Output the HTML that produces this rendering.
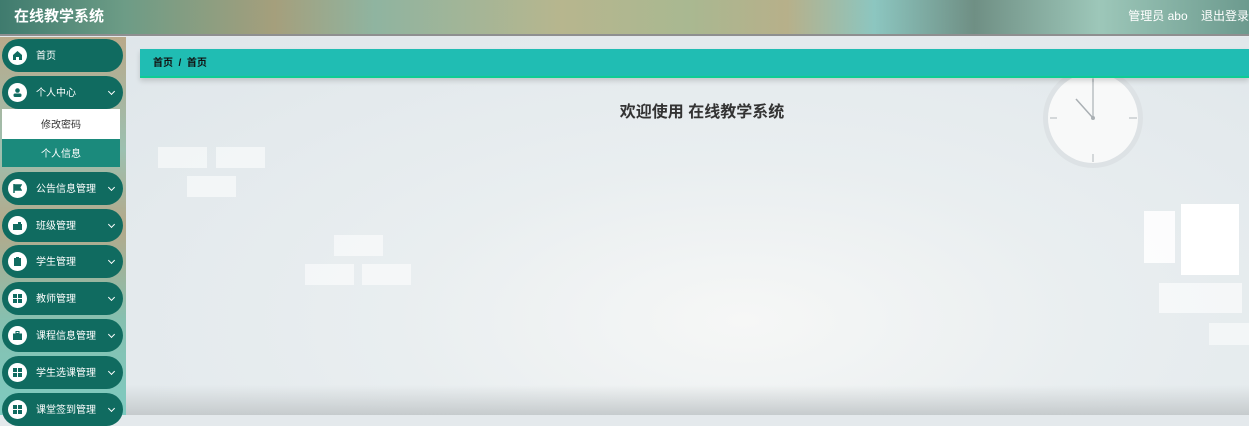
<!DOCTYPE html>
<html><head><meta charset="utf-8"><style>
*{margin:0;padding:0;box-sizing:border-box}
body{width:1249px;height:415px;overflow:hidden;position:relative;font-family:"Liberation Sans","Noto Sans CJK SC",sans-serif;background:#e4e9ec}
.hdr{position:absolute;left:0;top:0;width:1249px;height:36px;background:linear-gradient(90deg,#3f7b6e 0%,#6d9c86 10%,#a59f7c 22%,#8fb4a0 30%,#b7b68e 45%,#a9b891 55%,#b7b08a 63%,#8cc6c0 70%,#6f8f84 78%,#9dc7b9 88%,#6c9a8e 100%);border-bottom:2px solid #8e8f90}
.hdr .t{position:absolute;left:14px;top:8px;color:#fff;font-size:15px;font-weight:bold;line-height:18px}
.hdr .r{position:absolute;right:0;top:9px;color:#fff;font-size:12px;line-height:14px}
.side{position:absolute;left:0;top:37px;width:126px;height:378px;background:linear-gradient(180deg,#b9a98a 0%,#9cc0b0 30%,#b4a98a 50%,#86c0b0 75%,#7ecac0 100%)}
.main{position:absolute;left:126px;top:37px;width:1123px;height:378px;background:radial-gradient(ellipse at 55% 75%,#f6f7f6 0%,#e9eef0 40%,#dfe6ea 100%)}
.bot{position:absolute;left:126px;top:385px;width:1123px;height:30px;background:linear-gradient(180deg,rgba(200,205,208,0),#c6cbcd)}
.it{position:absolute;left:2px;width:121px;height:33px;background:#106b60;border-radius:17px;color:#fff;font-size:10px;line-height:12px}
.it .ic{position:absolute;left:6px;top:7px;width:19px;height:19px;border-radius:50%;background:#fff}
.it .ic svg{position:absolute;left:5px;top:5px}
.it .l{position:absolute;left:34px;top:12px}
.it .a{position:absolute;right:9px;top:13px;width:5px;height:5px;border-right:1px solid #fff;border-bottom:1px solid #fff;transform:rotate(45deg)}
.sub{position:absolute;left:2px;width:118px;color:#333;font-size:10px;line-height:12px;text-align:center}
.bc{position:absolute;left:140px;top:49px;width:1109px;height:29px;background:#20bdb3;border-bottom:2px solid #0fcc94;box-shadow:0 3px 5px rgba(0,0,0,.15);font-size:10px;line-height:12px;font-weight:bold;color:#111;padding:9px 0 0 13px}
.ti{position:absolute;left:0;width:1249px;top:104px;text-align:center;font-size:16px;line-height:18px;font-weight:bold;color:#333;padding-left:155px}
.sq{position:absolute;background:rgba(255,255,255,.55)}
</style></head><body>
<div class="hdr"><div class="t">在线教学系统</div><div class="r">管理员 abo&nbsp;&nbsp;&nbsp;&nbsp;退出登录</div></div>
<div class="side"></div>
<div class="main"></div>
<div class="bot"></div>
<div class="sq" style="left:158px;top:147px;width:49px;height:21px"></div>
<div class="sq" style="left:216px;top:147px;width:49px;height:21px"></div>
<div class="sq" style="left:187px;top:176px;width:49px;height:21px"></div>
<div class="sq" style="left:334px;top:235px;width:49px;height:21px"></div>
<div class="sq" style="left:305px;top:264px;width:49px;height:21px"></div>
<div class="sq" style="left:362px;top:264px;width:49px;height:21px"></div>
<div class="sq" style="left:1144px;top:211px;width:31px;height:52px;background:rgba(255,255,255,.85)"></div>
<div class="sq" style="left:1181px;top:204px;width:58px;height:71px;background:#fff"></div>
<div class="sq" style="left:1159px;top:283px;width:83px;height:30px;background:rgba(255,255,255,.6)"></div>
<div class="sq" style="left:1209px;top:323px;width:40px;height:22px;background:rgba(255,255,255,.5)"></div>
<svg style="position:absolute;left:1040px;top:66px" width="106" height="104"><circle cx="53" cy="52" r="50" fill="#dde2e5"/><circle cx="53" cy="52" r="45" fill="#f8f9f9"/><g stroke="#c8cdd0" stroke-width="1.5"><line x1="53" y1="9" x2="53" y2="16"/><line x1="53" y1="88" x2="53" y2="96"/><line x1="10" y1="52" x2="17" y2="52"/><line x1="89" y1="52" x2="97" y2="52"/></g><line x1="53" y1="52" x2="53" y2="13" stroke="#aab0b4" stroke-width="1.2"/><line x1="53" y1="52" x2="36" y2="33" stroke="#aab0b4" stroke-width="1.5"/><circle cx="53" cy="52" r="2" fill="#aab0b4"/></svg>
<div class="bc">首页&nbsp;&nbsp;/&nbsp;&nbsp;首页</div>
<div class="ti">欢迎使用 在线教学系统</div>
<div class="it" style="top:39px"><div class="ic"><svg width="9" height="9"><path d="M4.5 0L9 4V9H6V6H3V9H0V4Z" fill="#106b60"/></svg></div><div class="l">首页</div></div>
<div class="it" style="top:76px"><div class="ic"><svg width="9" height="9"><circle cx="4.5" cy="2.5" r="2.3" fill="#106b60"/><rect x="0.5" y="5.5" width="8" height="3.5" rx="1.5" fill="#106b60"/></svg></div><div class="l">个人中心</div><div class="a"></div></div>
<div class="sub" style="top:109px;height:30px;background:#fff;padding-top:11px">修改密码</div>
<div class="sub" style="top:139px;height:28px;background:#1b8a7c;color:#fff;padding-top:10px">个人信息</div>
<div class="it" style="top:172px"><div class="ic"><svg width="9" height="9"><path d="M1 0V9M1 1H8L6.5 3.5L8 6H1" stroke="#106b60" stroke-width="1.5" fill="#106b60"/></svg></div><div class="l">公告信息管理</div><div class="a"></div></div>
<div class="it" style="top:209px"><div class="ic"><svg width="9" height="9"><rect x="0" y="3" width="9" height="6" fill="#106b60"/><rect x="5" y="1" width="3" height="3" fill="#106b60"/></svg></div><div class="l">班级管理</div><div class="a"></div></div>
<div class="it" style="top:245px"><div class="ic"><svg width="9" height="9"><rect x="1" y="1" width="7" height="8" fill="#106b60"/><rect x="3" y="0" width="3" height="2" fill="#106b60"/></svg></div><div class="l">学生管理</div><div class="a"></div></div>
<div class="it" style="top:282px"><div class="ic"><svg width="9" height="9"><rect x="0" y="0" width="4" height="4" fill="#106b60"/><rect x="5" y="0" width="4" height="4" fill="#106b60"/><rect x="0" y="5" width="4" height="4" fill="#106b60"/><rect x="5" y="5" width="4" height="4" fill="#106b60"/></svg></div><div class="l">教师管理</div><div class="a"></div></div>
<div class="it" style="top:319px"><div class="ic"><svg width="9" height="9"><rect x="0" y="2.5" width="9" height="6.5" fill="#106b60"/><rect x="3" y="0.5" width="3" height="2" fill="none" stroke="#106b60"/></svg></div><div class="l">课程信息管理</div><div class="a"></div></div>
<div class="it" style="top:356px"><div class="ic"><svg width="9" height="9"><rect x="0" y="0" width="4" height="4" fill="#106b60"/><rect x="5" y="0" width="4" height="4" fill="#106b60"/><rect x="0" y="5" width="4" height="4" fill="#106b60"/><rect x="5" y="5" width="4" height="4" fill="#106b60"/></svg></div><div class="l">学生选课管理</div><div class="a"></div></div>
<div class="it" style="top:393px"><div class="ic"><svg width="9" height="9"><rect x="0" y="0" width="4" height="4" fill="#106b60"/><rect x="5" y="0" width="4" height="4" fill="#106b60"/><rect x="0" y="5" width="4" height="4" fill="#106b60"/><rect x="5" y="5" width="4" height="4" fill="#106b60"/></svg></div><div class="l">课堂签到管理</div><div class="a"></div></div>
</body></html>
